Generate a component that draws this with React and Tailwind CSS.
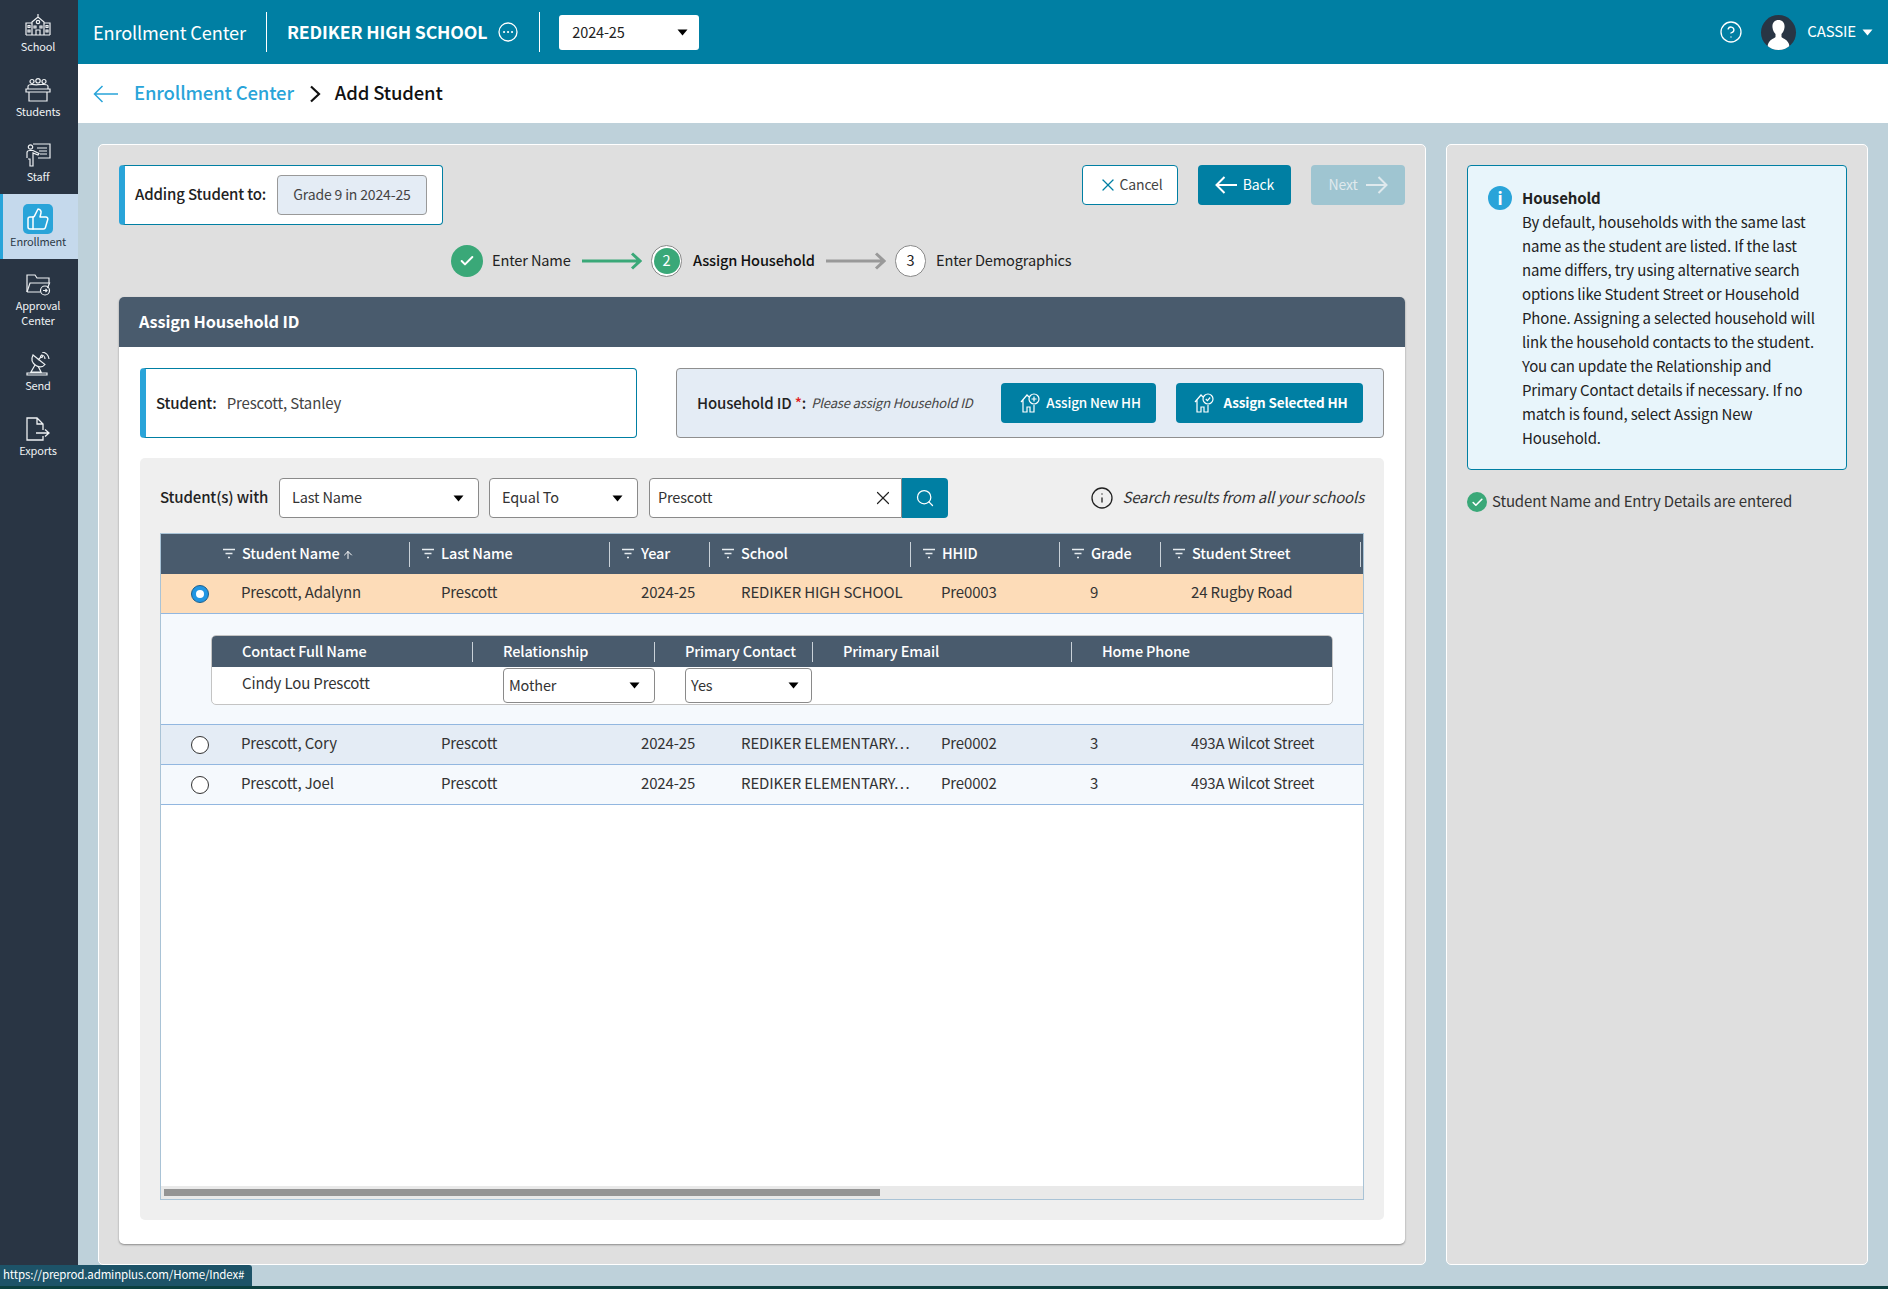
import { ArrowUp, Check, CircleHelp, Info, Search, ThumbsUp, X } from "lucide-react";

const Caret = ({ className = "text-black" }) => (
  <svg width="11" height="7" viewBox="0 0 11 7" className={`shrink-0 ${className}`}>
    <path d="M0.5 0.5h10L5.5 6.5z" fill="currentColor" />
  </svg>
);

const Filter = () => (
  <svg width="12" height="12" viewBox="0 0 12 12" className="shrink-0 text-[#e6ebef]">
    <path d="M0 1.5h12M2.5 5.5h7M5 9.5h2" stroke="currentColor" strokeWidth="1.4" fill="none" />
  </svg>
);

const SchoolIcon = () => (
  <svg width="26" height="22" viewBox="0 0 26 22" fill="none" stroke="currentColor" strokeWidth="1.2">
    <path d="M1 21V9h6v12M19 21V9h6v12M7 8l6-5 6 5v13H7zM1 21h24M13 3V0" />
    <circle cx="13" cy="8" r="1.7" />
    <path d="M11 21v-5h4v5M9 12h2v2H9zM15 12h2v2h-2zM3 11.5h2v2H3zM3 16h2v2H3zM21 11.5h2v2h-2zM21 16h2v2h-2z" />
  </svg>
);

const StudentsIcon = () => (
  <svg width="26" height="24" viewBox="0 0 26 24" fill="none" stroke="currentColor" strokeWidth="1.2">
    <circle cx="7" cy="3.500" r="2" />
    <circle cx="13" cy="2.800" r="2.200" />
    <circle cx="19" cy="3.500" r="2" />
    <path d="M3 11V8.500C3 7 5 6.500 7 6.500s3 .5 6 .2 4-.2 6-.2 4 .5 4 2V11" />
    <path d="M1 11h24v3H1zM4 14v9h18v-9M4 23h18" />
  </svg>
);

const StaffIcon = () => (
  <svg width="25" height="24" viewBox="0 0 25 24" fill="none" stroke="currentColor" strokeWidth="1.2">
    <path d="M7 1h17v14H12M11 5h10M13 8h8M14 11h7" />
    <circle cx="4.500" cy="4" r="2.200" />
    <path d="M1 15V9.500C1 8 2.500 7.500 4 7.500h3l6 3-1 1.500-5-2V23H4v-7M4 23V16H2" />
  </svg>
);

const ApprovalIcon = () => (
  <svg width="25" height="23" viewBox="0 0 25 23" fill="none" stroke="currentColor" strokeWidth="1.2">
    <path d="M1 19V2h8l2 3h12v5" />
    <path d="M1 19l3-9h19.500l-2 5M1 19h13" />
    <circle cx="19" cy="17.500" r="4.500" />
    <path d="M17 17.500h4M19.500 16l1.500 1.500-1.500 1.500" />
  </svg>
);

const SendIcon = () => (
  <svg width="24" height="24" viewBox="0 0 24 24" fill="none" stroke="currentColor" strokeWidth="1.2">
    <path d="M7 3c-2 4-1 8 3 10.500s7 1.500 9-1z" />
    <path d="M12 8l3-3M15 3a4 4 0 0 1 4 4M16 0a8 8 0 0 1 7 7" />
    <circle cx="15.500" cy="4.500" r="1" />
    <path d="M9 13l-4 7h10l-3-6M1 23h20v-2H1z" />
  </svg>
);

const ExportsIcon = () => (
  <svg width="24" height="24" viewBox="0 0 24 24" fill="none" stroke="currentColor" strokeWidth="1.3">
    <path d="M17 13V7l-6-6H1v22h16v-4M11 1v6h6" />
    <path d="M10 16h12M19 12.500l4 3.500-4 3.500" />
  </svg>
);

const HouseIcon = ({ mark }) => (
  <svg width="21" height="20" viewBox="0 0 21 20" fill="none" stroke="currentColor" strokeWidth="1.2" className="shrink-0">
    <path d="M1 9l6-7 2 2M3 7v12h4v-5h3v5h4v-7" />
    <circle cx="14" cy="6" r="5" />
    {mark === "plus" ? <path d="M14 3.500v5M11.500 6h5" /> : <path d="M11.800 6l1.600 1.700 2.800-3.200" />}
  </svg>
);

const sideItems = [
  { label: "School", icon: <SchoolIcon />, h: "h-[65px]" },
  { label: "Students", icon: <StudentsIcon />, h: "h-[65px]" },
  { label: "Staff", icon: <StaffIcon />, h: "h-[64px]" },
  { label: "Enrollment", active: true, h: "h-[65px]" },
  { label: "Approval Center", icon: <ApprovalIcon />, h: "h-[80px]" },
  { label: "Send", icon: <SendIcon />, h: "h-[65px]" },
  { label: "Exports", icon: <ExportsIcon />, h: "h-[65px]" },
];

const columns = [
  { label: "Student Name", sort: true },
  { label: "Last Name" },
  { label: "Year" },
  { label: "School" },
  { label: "HHID" },
  { label: "Grade" },
  { label: "Student Street" },
];

const rowGrid = "grid grid-cols-[249px_200px_100px_201px_149px_101px_200px]";
const contactGrid = "grid grid-cols-[261px_182px_158px_259px_259px]";

const Sidebar = () => (
  <aside className="w-[78px] shrink-0 bg-[#293544] text-[#eef1f3]">
    {sideItems.map((item) =>
      item.active ? (
        <div key={item.label} className={`${item.h} flex flex-col items-center border-l-[3px] border-[#29a4d9] bg-[#c5d9ec] pr-[5px] pt-[10px] text-[#2c3a48]`}>
          <div className="flex h-[30px] w-[30px] items-center justify-center rounded-[5px] bg-[#29a4d9] text-white">
            <ThumbsUp size={24} strokeWidth={1.5} />
          </div>
          <span className="text-[11px] leading-[14px]">{item.label}</span>
        </div>
      ) : (
        <div key={item.label} className={`${item.h} flex flex-col items-center pr-[2px] pt-[13px]`}>
          <div className="flex h-[24px] items-center justify-center">{item.icon}</div>
          <span className="mt-[2px] w-[64px] text-center text-[11px] leading-[15px]">{item.label}</span>
        </div>
      )
    )}
  </aside>
);

const TopBar = () => (
  <header className="flex h-[64px] shrink-0 items-center bg-[#007fa3] px-[15px] text-white">
    <span className="text-[18.200px] leading-none">Enrollment Center</span>
    <span className="ml-[20px] h-[40px] w-px bg-white" />
    <span className="ml-[20px] text-[17.700px] font-semibold leading-none">REDIKER HIGH SCHOOL</span>
    <svg width="20" height="20" viewBox="0 0 20 20" fill="none" stroke="currentColor" strokeWidth="1.3" className="ml-[11px]">
      <circle cx="10" cy="10" r="9" />
      <path d="M6 10h.1M10 10h.1M14 10h.1" strokeWidth="2" strokeLinecap="round" />
    </svg>
    <span className="ml-[21px] h-[40px] w-px bg-white" />
    <div className="ml-[19px] flex h-[35px] w-[140px] items-center justify-between rounded-[3px] bg-white pl-[13px] pr-[11px] text-[14.500px] text-[#222]">
      <span>2024-25</span>
      <Caret />
    </div>
    <CircleHelp size={24} strokeWidth={1.3} className="ml-auto" />
    <div className="ml-[18px] h-[35px] w-[35px] overflow-hidden rounded-full bg-[#293544]">
      <svg viewBox="0 0 35 35" className="h-full w-full text-white">
        <path d="M17.500 5c-4 0-6.500 3-6 7.500.3 3 1.500 5 3 6.500v3c-1 1.500-5 2-7 6-.5 1-1 2-1 7h22c0-5-.5-6-1-7-2-4-6-4.500-7-6v-3c1.500-1.500 2.700-3.500 3-6.500.5-4.500-2-7.500-6-7.500z" fill="currentColor" />
      </svg>
    </div>
    <span className="ml-[11px] pb-[3px] text-[15px] leading-none">CASSIE</span>
    <Caret className="ml-[6px] text-white" />
  </header>
);

const Breadcrumb = () => (
  <div className="flex h-[59px] shrink-0 items-center bg-white pl-[15px] text-[18.500px]">
    <svg width="26" height="18" viewBox="0 0 26 18" fill="none" stroke="#29a4d9" strokeWidth="1.5" className="mr-[15px]">
      <path d="M25 9H2M9.500 1L1.500 9l8 8" />
    </svg>
    <span className="pb-[2px] font-medium text-[#29a4d9]">Enrollment Center</span>
    <svg width="12" height="18" viewBox="0 0 12 18" fill="none" stroke="#111" strokeWidth="2.2" className="ml-[15px] mr-[14px]">
      <path d="M2 1.500L10 9l-8 7.500" />
    </svg>
    <span className="pb-[2px] font-medium text-[#111]">Add Student</span>
  </div>
);

const StepArrow = ({ color }) => (
  <svg width="60" height="18" viewBox="0 0 60 18" fill="none" stroke={color} strokeWidth="3" className="shrink-0">
    <path d="M0 9h57M50 1.500L58 9l-8 7.500" />
  </svg>
);

const Stepper = () => (
  <div className="mt-[20px] flex h-[32px] items-center whitespace-nowrap pl-[332px] text-[14.600px] text-[#222]">
    <div className="flex h-[32px] w-[32px] items-center justify-center rounded-full bg-[#3aa878] text-white">
      <Check size={16} strokeWidth={3} />
    </div>
    <span className="ml-[9px] w-[80px] pb-[2px]">Enter Name</span>
    <span className="ml-[10px]"><StepArrow color="#3aa878" /></span>
    <div className="ml-[9px] flex h-[32px] w-[31px] items-center justify-center rounded-full border border-[#888] bg-white">
      <span className="flex h-[26px] w-[26px] items-center justify-center rounded-full bg-[#3aa878] pb-[2px] text-white">2</span>
    </div>
    <span className="ml-[11px] w-[122px] pb-[2px] font-medium text-[#111]">Assign Household</span>
    <span className="ml-[11px]"><StepArrow color="#999999" /></span>
    <div className="ml-[9px] flex h-[32px] w-[31px] items-center justify-center rounded-full border border-[#888] bg-white pb-[2px]">3</div>
    <span className="ml-[10px] pb-[2px]">Enter Demographics</span>
  </div>
);

const SelectBox = ({ value, className }) => (
  <div className={`flex items-center justify-between rounded-[4px] border border-[#8a8a8a] bg-white text-[14.500px] text-[#333] ${className}`}>
    <span className="pb-[2px]">{value}</span>
    <Caret />
  </div>
);

const Radio = ({ checked }) =>
  checked ? (
    <span className="flex h-[18px] w-[18px] shrink-0 items-center justify-center rounded-full border border-[#1d5f8c] bg-[#2196e3]">
      <span className="h-[8px] w-[8px] rounded-full bg-white" />
    </span>
  ) : (
    <span className="h-[18px] w-[18px] shrink-0 rounded-full border border-[#333] bg-white" />
  );

const StudentRow = ({ name, last, school, hhid, grade, street, bg, checked }) => (
  <div className={`${rowGrid} h-[40px] items-center border-b border-[#92b7e0] text-[15px] text-[#333] ${bg}`}>
    <div className="flex items-center pl-[30px]">
      <Radio checked={checked} />
      <span className="ml-[32px] pb-[2px]">{name}</span>
    </div>
    <div className="pb-[2px] pl-[31px]">{last}</div>
    <div className="pb-[2px] pl-[31px]">2024-25</div>
    <div className="whitespace-nowrap pb-[2px] pl-[31px]">{school}</div>
    <div className="pb-[2px] pl-[30px]">{hhid}</div>
    <div className="pb-[2px] pl-[30px]">{grade}</div>
    <div className="pb-[2px] pl-[30px]">{street}</div>
  </div>
);

const ContactTable = () => (
  <div className="h-[110px] bg-[#f5f9fd] pl-[50px] pr-[30px] pt-[21px]">
    <div className="h-[70px] rounded-[5px] border border-[#c4c4c4] bg-white">
      <div className={`${contactGrid} h-[31px] items-center rounded-t-[4px] bg-[#495b6d] text-[14.500px] font-medium text-white`}>
        {["Contact Full Name", "Relationship", "Primary Contact", "Primary Email", "Home Phone"].map((h, i) => (
          <div key={h} className={`flex h-[20px] items-center pb-[2px] pl-[30px] ${i < 4 ? "border-r border-[#c9d1d8]" : ""}`}>
            {h}
          </div>
        ))}
      </div>
      <div className={`${contactGrid} pt-[1px] text-[15px] text-[#333]`}>
        <div className="pl-[30px] leading-[30px]">Cindy Lou Prescott</div>
        <div className="pl-[30px]">
          <SelectBox value="Mother" className="h-[35px] w-[152px] pl-[5px] pr-[14px]" />
        </div>
        <div>
          <SelectBox value="Yes" className="ml-[30px] h-[35px] w-[127px] pl-[5px] pr-[12px]" />
        </div>
      </div>
    </div>
  </div>
);

const ResultsTable = () => (
  <div className="mt-[15px] flex flex-1 flex-col border border-[#a9c3d6] bg-white">
    <div className={`${rowGrid} h-[40px] items-center bg-[#495b6d] text-[14.500px] font-medium text-white`}>
      {columns.map((c, i) => (
        <div key={c.label} className={`flex h-[25px] items-center gap-[7px] border-r border-[#c9d1d8] ${i === 0 ? "pl-[62px]" : "pl-[12px]"}`}>
          <Filter />
          <span className="pb-[2px]">{c.label}</span>
          {c.sort && <ArrowUp size={12} className="-ml-[5px] mt-[2px]" />}
        </div>
      ))}
    </div>
    <StudentRow name="Prescott, Adalynn" last="Prescott" school="REDIKER HIGH SCHOOL" hhid="Pre0003" grade="9" street="24 Rugby Road" bg="bg-[#fddcb8]" checked />
    <ContactTable />
    <div className="h-px bg-[#92b7e0]" />
    <StudentRow name="Prescott, Cory" last="Prescott" school="REDIKER ELEMENTARY…" hhid="Pre0002" grade="3" street="493A Wilcot Street" bg="bg-[#e4ecf5]" />
    <StudentRow name="Prescott, Joel" last="Prescott" school="REDIKER ELEMENTARY…" hhid="Pre0002" grade="3" street="493A Wilcot Street" bg="bg-[#f5f9fd]" />
    <div className="mt-auto h-[13px] bg-[#e9e9e9] pl-[3px] pt-[3px]">
      <div className="h-[7px] w-[716px] bg-[#949494]" />
    </div>
  </div>
);

const AssignCard = () => (
  <section className="mt-[20px] flex flex-1 flex-col rounded-[5px] bg-white shadow-[0_1px_2px_#8a8a8a]">
    <h2 className="flex h-[50px] shrink-0 items-center rounded-t-[5px] bg-[#495b6d] pb-[2px] pl-[20px] text-[16.300px] font-semibold text-white">
      Assign Household ID
    </h2>
    <div className="flex flex-1 flex-col px-[21px] pb-[24px] pt-[21px]">
      <div className="flex justify-between">
        <div className="flex h-[70px] w-[497px] items-center rounded-[4px] border border-l-[6px] border-[#007fa3] border-l-[#29a4d9] pl-[10px] text-[15px]">
          <span className="font-medium text-[#222]">Student:</span>
          <span className="ml-[10px] text-[#444]">Prescott, Stanley</span>
        </div>
        <div className="flex h-[70px] w-[708px] items-center rounded-[4px] border border-[#8f8f8f] bg-[#e4ecf5] px-[20px]">
          <span className="text-[15px] font-medium text-[#222]">
            Household ID <span className="text-[#e02020]">*</span>:
          </span>
          <span className="ml-[5px] text-[13px] italic text-[#444]">Please assign Household ID</span>
          <button className="ml-auto flex h-[40px] w-[155px] items-center justify-center gap-[5px] rounded-[4px] bg-[#007fa3] pl-[4px] text-[13.500px] font-medium text-white">
            <HouseIcon mark="plus" /> <span className="pb-[2px]">Assign New HH</span>
          </button>
          <button className="ml-[20px] flex h-[40px] w-[187px] items-center justify-center gap-[8px] rounded-[4px] bg-[#007fa3] pl-[3px] text-[13.500px] font-semibold text-white">
            <HouseIcon mark="check" /> <span className="pb-[2px]">Assign Selected HH</span>
          </button>
        </div>
      </div>
      <div className="mt-[20px] flex flex-1 flex-col rounded-[5px] bg-[#efefef] p-[20px]">
        <div className="flex h-[40px] items-center text-[15px]">
          <span className="w-[119px] pb-[2px] font-medium text-[#222]">Student(s) with</span>
          <SelectBox value="Last Name" className="h-[40px] w-[200px] pl-[12px] pr-[14px]" />
          <SelectBox value="Equal To" className="ml-[10px] h-[40px] w-[149px] pl-[12px] pr-[14px]" />
          <div className="ml-[11px] flex h-[40px] w-[253px] items-center justify-between rounded-l-[4px] border border-[#8a8a8a] bg-white pl-[8px] pr-[7px] text-[14.500px] text-[#333]">
            <span className="pb-[2px]">Prescott</span>
            <X size={22} strokeWidth={1.3} className="text-[#222]" />
          </div>
          <div className="flex h-[40px] w-[46px] items-center justify-center rounded-r-[4px] bg-[#007fa3] text-white">
            <Search size={20} strokeWidth={1.5} />
          </div>
          <Info size={24} strokeWidth={1.3} className="ml-auto text-[#222]" />
          <span className="ml-[8px] pb-[2px] italic text-[#333]">Search results from all your schools</span>
        </div>
        <ResultsTable />
      </div>
    </div>
  </section>
);

const MainPanel = () => (
  <div className="flex w-[1328px] shrink-0 flex-col rounded-[5px] border border-white bg-[#dfdfdf] p-[20px]">
    <div className="flex items-start justify-between">
      <div className="flex h-[60px] w-[324px] items-center rounded-[4px] border border-l-[6px] border-[#007fa3] border-l-[#29a4d9] bg-white pl-[10px] text-[15px]">
        <span className="w-[131px] whitespace-nowrap pb-[2px] font-medium text-[#222]">Adding Student to:</span>
        <span className="ml-[11px] flex h-[40px] w-[150px] items-center justify-center rounded-[4px] border border-[#999] bg-[#e4ecf5] pb-[2px] text-[14px] text-[#444]">
          Grade 9 in 2024-25
        </span>
      </div>
      <div className="flex gap-[20px]">
        <button className="flex h-[40px] w-[96px] items-center justify-center gap-[2px] rounded-[4px] border border-[#007fa3] bg-white text-[14px] text-[#444]">
          <X size={20} strokeWidth={1.5} className="text-[#007fa3]" /> <span className="pb-[2px]">Cancel</span>
        </button>
        <button className="flex h-[40px] w-[93px] items-center justify-center gap-[6px] rounded-[4px] bg-[#007fa3] text-[14px] text-white">
          <svg width="22" height="18" viewBox="0 0 22 18" fill="none" stroke="currentColor" strokeWidth="2"><path d="M22 9H2M9.500 1L1.500 9l8 8" /></svg>
          <span className="pb-[2px]">Back</span>
        </button>
        <button className="flex h-[40px] w-[94px] items-center justify-center gap-[8px] rounded-[4px] bg-[#9fc5d1] text-[14px] text-[#dfe9ed]">
          <span className="pb-[2px]">Next</span>
          <svg width="22" height="18" viewBox="0 0 22 18" fill="none" stroke="currentColor" strokeWidth="2"><path d="M0 9h20M12.500 1l8 8-8 8" /></svg>
        </button>
      </div>
    </div>
    <Stepper />
    <AssignCard />
  </div>
);

const HelpPanel = () => (
  <div className="w-[422px] shrink-0 rounded-[5px] border border-white bg-[#dfdfdf] px-[20px] pt-[20px]">
    <div className="flex h-[305px] rounded-[4px] border border-[#007fa3] bg-[#e8f5fb] pl-[20px] pr-[30px] pt-[20px] text-[15px] leading-[24px] text-[#222]">
      <span className="flex h-[24px] w-[24px] shrink-0 items-center justify-center rounded-full bg-[#29a4d9] text-[17px] font-bold text-white">i</span>
      <p className="ml-[10px]">
        <strong className="font-semibold">Household</strong>
        <br />
        By default, households with the same last name as the student are listed. If the last name differs, try using alternative search options like Student Street or Household Phone. Assigning a selected household will link the household contacts to the student. You can update the Relationship and Primary Contact details if necessary. If no match is found, select Assign New Household.
      </p>
    </div>
    <div className="mt-[21px] flex items-center gap-[5px] text-[15px] leading-[20px] text-[#333]">
      <span className="flex h-[20px] w-[20px] items-center justify-center rounded-full bg-[#3aa878] text-white">
        <Check size={13} strokeWidth={3} />
      </span>
      <span className="pb-[2px]">Student Name and Entry Details are entered</span>
    </div>
  </div>
);

export default function App() {
  return (
    <div className="relative flex h-[1289px] w-[1888px] flex-col overflow-hidden bg-[#bed1da] font-['Noto_Sans_CJK_KR',sans-serif] tracking-[-0.15px]">
      <div className="flex min-h-0 flex-1">
        <Sidebar />
        <div className="flex min-w-0 flex-1 flex-col">
          <TopBar />
          <Breadcrumb />
          <main className="flex flex-1 gap-[20px] pb-[21px] pl-[20px] pt-[21px]">
            <MainPanel />
            <HelpPanel />
          </main>
        </div>
      </div>
      <div className="h-[3px] shrink-0 bg-[#0b3f3f]" />
      <div className="absolute bottom-[3px] left-0 flex h-[21px] w-[252px] items-center rounded-tr-[3px] bg-[#1d5368] pb-[2px] pl-[3px] text-[11.500px] text-white">
        https://preprod.adminplus.com/Home/Index#
      </div>
    </div>
  );
}
